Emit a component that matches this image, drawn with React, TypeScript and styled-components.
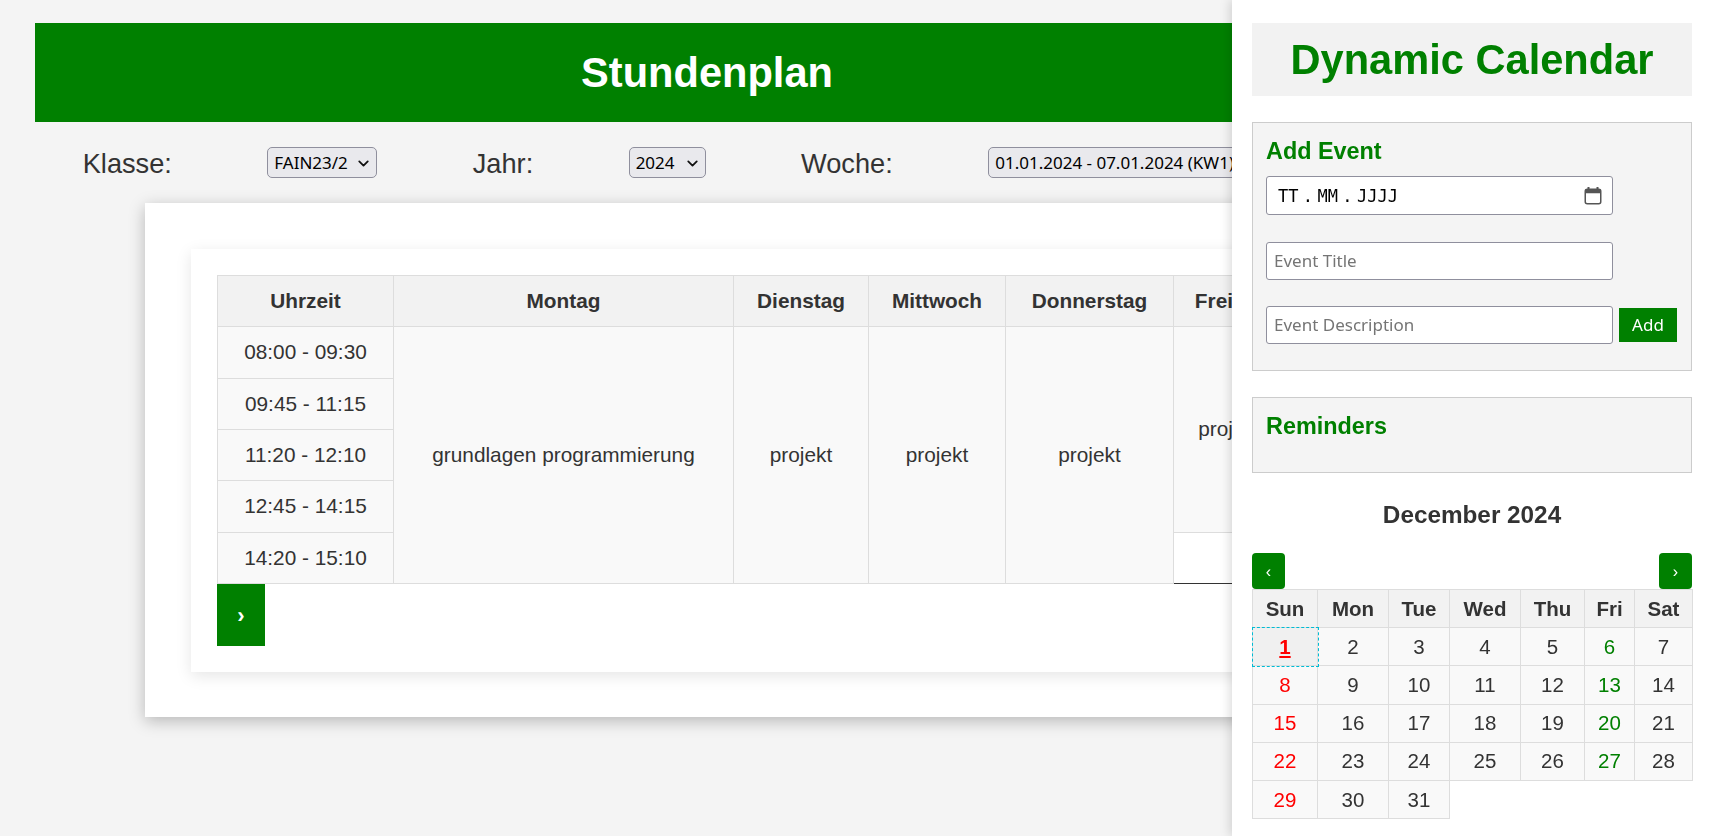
import React from 'react';
import styled, { createGlobalStyle } from 'styled-components';
import { ChevronDown } from 'lucide-react';

const GlobalStyle = createGlobalStyle`
  html, body {
    margin: 0;
    height: 100%;
    overflow: hidden;
    background: #f4f4f4;
    color: #333;
    font-family: "Liberation Sans", Arial, sans-serif;
  }
`;

const Page = styled.div`
  width: 1344px;
  padding: 23px 0 0 35px;
`;

const Header = styled.header`
  background: #008000;
  color: #fff;
  height: 99px;
  display: flex;
  align-items: center;
  justify-content: center;
`;

const PageTitle = styled.h1`
  margin: 0;
  font-size: 41.6px;
  font-weight: 700;
`;

const Filters = styled.div`
  display: flex;
  align-items: center;
  justify-content: space-around;
  height: 31px;
  margin: 25px 0;
`;

const FilterLabel = styled.label`
  padding-top: 2px;
  font-size: 27.2px;
  color: #333;
`;

const SelectWrap = styled.div<{ $width: number }>`
  position: relative;
  width: ${(p) => p.$width}px;
  height: 31px;
`;

const Select = styled.select`
  appearance: none;
  width: 100%;
  height: 100%;
  padding: 0 0 0 6px;
  background: #e9e9ed;
  border: 1px solid #8f8f9d;
  border-radius: 5px;
  color: #000;
  font-family: "Noto Sans", sans-serif;
  font-size: 17px;
`;

const SelectArrow = styled(ChevronDown)`
  position: absolute;
  top: 8px;
  right: 5px;
  width: 17px;
  height: 17px;
  color: #111;
  pointer-events: none;
`;

const OuterCard = styled.section`
  width: 1124px;
  margin-left: 110px;
  padding: 46px 0 45px 46px;
  background: #fff;
  box-shadow: 0 4px 15px rgba(0, 0, 0, 0.25);
`;

const InnerCard = styled.div`
  width: 1124px;
  padding: 26px;
  background: #fff;
  box-shadow: 0 4px 15px rgba(0, 0, 0, 0.1);
`;

const Table = styled.table`
  table-layout: fixed;
  width: 1068px;
  border-collapse: collapse;
  font-size: 20.8px;
`;

const Col = styled.col<{ $width: number }>`
  width: ${(p) => p.$width}px;
`;

const HeadCell = styled.th`
  box-sizing: border-box;
  height: 51.33px;
  padding: 0;
  background: #f2f2f2;
  border: 1px solid #ddd;
  font-weight: 700;
  text-align: center;
`;

const Cell = styled.td<{ $blank?: boolean }>`
  box-sizing: border-box;
  height: 51.33px;
  padding: 0;
  background: ${(p) => (p.$blank ? '#fff' : '#f9f9f9')};
  border: 1px solid #ddd;
  border-bottom-color: ${(p) => (p.$blank ? '#333' : '#ddd')};
  text-align: center;
`;

const NextWeek = styled.button`
  display: block;
  width: 48px;
  height: 62px;
  padding: 3px 0 0;
  background: #008000;
  border: none;
  color: #fff;
  font-family: inherit;
  font-size: 22px;
  font-weight: 700;
`;

const Sidebar = styled.aside`
  position: fixed;
  top: 0;
  right: 0;
  bottom: 0;
  box-sizing: border-box;
  width: 478px;
  padding: 23px 18px 0 20px;
  background: #fff;
  box-shadow: -2px 0 10px rgba(0, 0, 0, 0.15);
`;

const SidebarTitle = styled.h1`
  height: 73px;
  margin: 0 0 26px;
  background: #f2f2f2;
  color: #008000;
  font-size: 41.6px;
  font-weight: 700;
  line-height: 73px;
  text-align: center;
`;

const Panel = styled.div<{ $height: number }>`
  box-sizing: border-box;
  height: ${(p) => p.$height}px;
  margin-bottom: 26px;
  padding: 14px 13px 0;
  background: #f4f4f4;
  border: 1px solid #ccc;
`;

const PanelTitle = styled.h3`
  margin: 0;
  color: #008000;
  font-size: 23.4px;
  font-weight: 700;
  line-height: 28px;
`;

const DateField = styled.div`
  display: flex;
  align-items: center;
  box-sizing: border-box;
  width: 347px;
  height: 39px;
  margin: 11px 0 27px;
  padding: 0 11px;
  background: #fff;
  border: 1px solid #8f8f9d;
  border-radius: 3px;
  color: #000;
  font-family: "DejaVu Sans Mono", monospace;
  font-size: 17px;
`;

const DateSep = styled.span`
  width: 19px;
  text-align: center;
`;

const DateIcon = styled.svg`
  margin-left: auto;
  margin-right: -1px;
`;

const TextField = styled.input`
  display: block;
  flex-shrink: 0;
  box-sizing: border-box;
  width: 347px;
  height: 38px;
  padding: 0 7px 2px;
  background: #fff;
  border: 1px solid #8f8f9d;
  border-radius: 3px;
  font-family: "Noto Sans", sans-serif;
  font-size: 17px;

  &::placeholder {
    color: #757575;
    opacity: 1;
  }
`;

const TitleField = styled(TextField)`
  margin-bottom: 26px;
`;

const DescRow = styled.div`
  display: flex;
  align-items: center;
  gap: 6px;
`;

const AddButton = styled.button`
  width: 58px;
  height: 34px;
  padding: 0 0 1px;
  background: #008000;
  border: none;
  color: #fff;
  font-family: "Noto Sans", sans-serif;
  font-size: 17px;
`;

const MonthTitle = styled.h2`
  margin: 28px 0 0;
  font-size: 24.3px;
  font-weight: 700;
  line-height: 28px;
  text-align: center;
`;

const MonthNav = styled.div`
  display: flex;
  justify-content: space-between;
  margin-top: 24px;
`;

const MonthButton = styled.button`
  width: 33px;
  height: 36px;
  padding: 2px 0 0;
  background: #008000;
  border: none;
  border-radius: 4px;
  color: #fff;
  font-family: inherit;
  font-size: 16px;
`;

const CalTable = styled.table`
  table-layout: fixed;
  width: 440px;
  border-collapse: collapse;
  font-size: 20.5px;
`;

const CalHead = styled.th`
  box-sizing: border-box;
  height: 38.2px;
  padding: 0;
  background: #f2f2f2;
  border: 1px solid #ddd;
  font-weight: 700;
  text-align: center;
`;

const dayColor = (kind?: string) => {
  if (kind === 'sun') return '#f00';
  if (kind === 'fri') return '#008000';
  return '#333';
};

const CalCell = styled.td<{ $kind?: string; $today?: boolean }>`
  box-sizing: border-box;
  height: 38.2px;
  padding: 0;
  background: ${(p) => (p.$today ? '#f0f0f0' : '#f9f9f9')};
  border: 1px solid #ddd;
  color: ${(p) => dayColor(p.$kind)};
  font-weight: ${(p) => (p.$today ? 700 : 400)};
  text-align: center;
  text-decoration: ${(p) => (p.$today ? 'underline' : 'none')};
  outline: ${(p) => (p.$today ? '1px dashed #00bcd4' : 'none')};
`;

const CalendarIcon = () => (
  <DateIcon width="18" height="20" viewBox="0 0 18 20" fill="none">
    <path d="M4.5 1v3M13.5 1v3" stroke="#555" strokeWidth="2" />
    <rect x="1.25" y="3.25" width="15.5" height="14.5" rx="2" stroke="#555" strokeWidth="1.5" />
    <rect x="1.25" y="3.25" width="15.5" height="4" fill="#555" />
  </DateIcon>
);

const slots = ['08:00 - 09:30', '09:45 - 11:15', '11:20 - 12:10', '12:45 - 14:15', '14:20 - 15:10'];
const scheduleCols = [176, 340, 135, 137, 168, 112];
const calCols = [65, 71, 61, 71, 64, 50, 58];
const weekdays = ['Sun', 'Mon', 'Tue', 'Wed', 'Thu', 'Fri', 'Sat'];
const weeks = [
  [1, 2, 3, 4, 5, 6, 7],
  [8, 9, 10, 11, 12, 13, 14],
  [15, 16, 17, 18, 19, 20, 21],
  [22, 23, 24, 25, 26, 27, 28],
  [29, 30, 31],
];

const kindOf = (i: number) => (i === 0 ? 'sun' : i === 5 ? 'fri' : undefined);

const App: React.FC = () => {
  return (
    <>
      <GlobalStyle />
      <Page>
        <Header>
          <PageTitle>Stundenplan</PageTitle>
        </Header>
        <Filters>
          <FilterLabel>Klasse:</FilterLabel>
          <SelectWrap $width={110}>
            <Select defaultValue="FAIN23/2">
              <option>FAIN23/2</option>
            </Select>
            <SelectArrow strokeWidth={2.5} />
          </SelectWrap>
          <FilterLabel>Jahr:</FilterLabel>
          <SelectWrap $width={77}>
            <Select defaultValue="2024">
              <option>2024</option>
            </Select>
            <SelectArrow strokeWidth={2.5} />
          </SelectWrap>
          <FilterLabel>Woche:</FilterLabel>
          <SelectWrap $width={343}>
            <Select defaultValue="w1">
              <option value="w1">01.01.2024 - 07.01.2024 (KW1)</option>
            </Select>
            <SelectArrow strokeWidth={2.5} />
          </SelectWrap>
        </Filters>
        <OuterCard>
          <InnerCard>
            <Table>
              <colgroup>
                {scheduleCols.map((w, i) => (
                  <Col key={i} $width={w} />
                ))}
              </colgroup>
              <thead>
                <tr>
                  <HeadCell>Uhrzeit</HeadCell>
                  <HeadCell>Montag</HeadCell>
                  <HeadCell>Dienstag</HeadCell>
                  <HeadCell>Mittwoch</HeadCell>
                  <HeadCell>Donnerstag</HeadCell>
                  <HeadCell>Freitag</HeadCell>
                </tr>
              </thead>
              <tbody>
                {slots.map((slot, i) => (
                  <tr key={slot}>
                    <Cell>{slot}</Cell>
                    {i === 0 && <Cell rowSpan={5}>grundlagen programmierung</Cell>}
                    {i === 0 && <Cell rowSpan={5}>projekt</Cell>}
                    {i === 0 && <Cell rowSpan={5}>projekt</Cell>}
                    {i === 0 && <Cell rowSpan={5}>projekt</Cell>}
                    {i === 0 && <Cell rowSpan={4}>projekt</Cell>}
                    {i === 4 && <Cell $blank />}
                  </tr>
                ))}
              </tbody>
            </Table>
            <NextWeek>›</NextWeek>
          </InnerCard>
        </OuterCard>
      </Page>
      <Sidebar>
        <SidebarTitle>Dynamic Calendar</SidebarTitle>
        <Panel $height={249}>
          <PanelTitle>Add Event</PanelTitle>
          <DateField>
            <span>TT</span>
            <DateSep>.</DateSep>
            <span>MM</span>
            <DateSep>.</DateSep>
            <span>JJJJ</span>
            <CalendarIcon />
          </DateField>
          <TitleField placeholder="Event Title" />
          <DescRow>
            <TextField placeholder="Event Description" />
            <AddButton>Add</AddButton>
          </DescRow>
        </Panel>
        <Panel $height={76}>
          <PanelTitle>Reminders</PanelTitle>
        </Panel>
        <MonthTitle>December 2024</MonthTitle>
        <MonthNav>
          <MonthButton>‹</MonthButton>
          <MonthButton>›</MonthButton>
        </MonthNav>
        <CalTable>
          <colgroup>
            {calCols.map((w, i) => (
              <Col key={i} $width={w} />
            ))}
          </colgroup>
          <thead>
            <tr>
              {weekdays.map((d) => (
                <CalHead key={d}>{d}</CalHead>
              ))}
            </tr>
          </thead>
          <tbody>
            {weeks.map((week) => (
              <tr key={week[0]}>
                {week.map((day, i) => (
                  <CalCell key={day} $kind={kindOf(i)} $today={day === 1}>
                    {day}
                  </CalCell>
                ))}
              </tr>
            ))}
          </tbody>
        </CalTable>
      </Sidebar>
    </>
  );
};

export default App;
